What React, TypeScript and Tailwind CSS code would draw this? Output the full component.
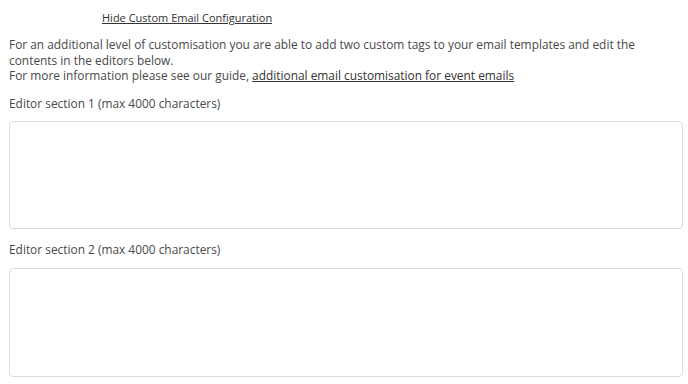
export default function App() {
  return (
    <div className="w-[688px] h-[384px] bg-white overflow-hidden pl-[9px] pr-[5px] text-[#4a4a4a] font-['Open_Sans',sans-serif]">
      <div className="pt-[10px] pl-[93px] text-[11px] leading-[16px]">
        <a href="#" className="underline text-[#333]">Hide Custom Email Configuration</a>
      </div>
      <p className="mt-[11px] pr-[40px] text-[11.9px] leading-[15.5px]">
        For an additional level of customisation you are able to add two custom tags to your email templates and edit the contents in the editors below.
        <br />
        For more information please see our guide,{' '}
        <a href="#" className="underline text-[#333]">additional email customisation for event emails</a>
      </p>
      <div className="mt-[11px] text-[11.9px] leading-[16px]">Editor section 1 (max 4000 characters)</div>
      <div className="mt-[10px] h-[108px] rounded-[4px] border border-[#dcdcdc] bg-white"></div>
      <div className="mt-[12px] text-[11.9px] leading-[16px]">Editor section 2 (max 4000 characters)</div>
      <div className="mt-[11px] h-[109px] rounded-[4px] border border-[#dcdcdc] bg-white"></div>
    </div>
  )
}
